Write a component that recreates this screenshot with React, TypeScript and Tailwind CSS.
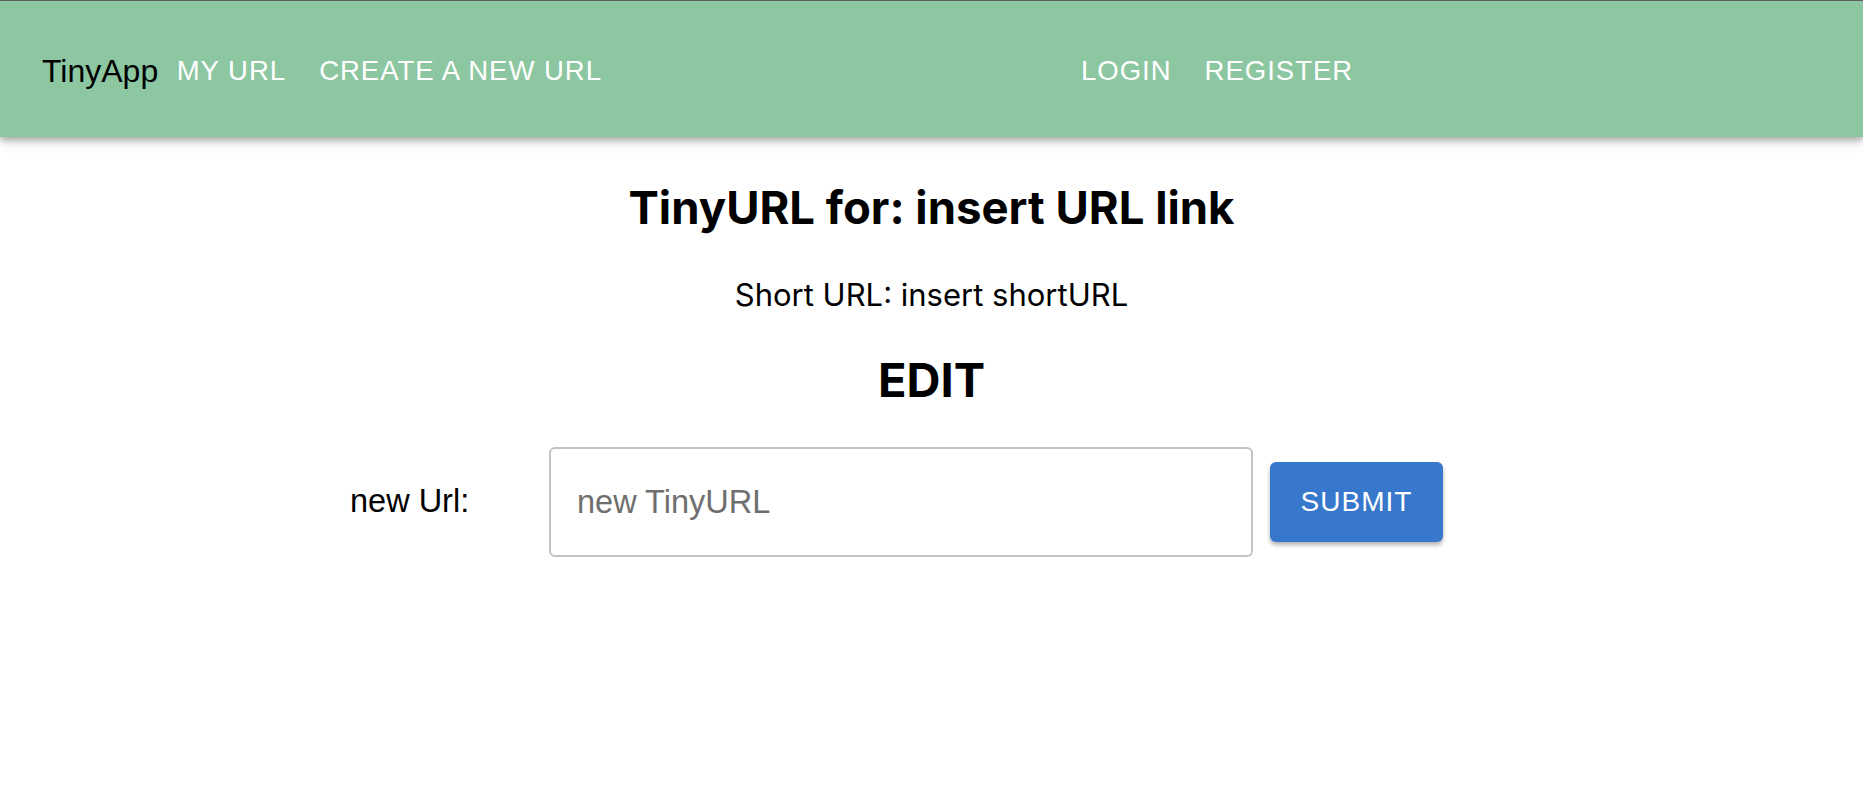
const navFont = { fontFamily: '"Liberation Sans", Arial, sans-serif' };

function NavButton({ children }: { children: string }) {
  return (
    <button className="px-[16.5px] py-2 text-[27.5px] tracking-[1px] uppercase text-white leading-none">
      {children}
    </button>
  );
}

export default function App() {
  return (
    <div className="min-h-[799px] bg-white text-black">
      <header
        style={navFont}
        className="relative z-10 flex h-[137px] items-center border-t border-[#5f5f5f] bg-[#8cc7a1] pl-[42px] pt-[4px] shadow-[0_3px_6px_rgba(0,0,0,0.25),0_6px_10px_rgba(0,0,0,0.12)]"
      >
        <span className="mr-[2px] text-[32px] leading-none">TinyApp</span>
        <NavButton>My URL</NavButton>
        <NavButton>Create a new URL</NavButton>
        <div className="w-[446px]" />
        <NavButton>Login</NavButton>
        <NavButton>Register</NavButton>
      </header>

      <main className="flex flex-col items-center font-['Inter',sans-serif]">
        <h1 className="mt-[44px] text-[45.5px] leading-[54px] font-bold">TinyURL for: insert URL link</h1>
        <p className="mt-[40px] text-[31px] leading-[40px]">Short URL: insert shortURL</p>
        <h2 className="mt-[37px] text-[47px] leading-[56px] font-bold">EDIT</h2>
      </main>

      <form
        style={navFont}
        className="mt-[39px] flex items-center pl-[350px]"
        onSubmit={(e) => e.preventDefault()}
      >
        <label className="w-[199px] text-[32.5px] leading-none -mt-[2px]">new Url:</label>
        <input
          placeholder="new TinyURL"
          className="h-[110px] w-[704px] rounded-[6px] border-2 border-[#c4c4c4] px-[26px] text-[32.5px] outline-none placeholder:text-[#6f6f6f]"
        />
        <button
          type="submit"
          className="ml-[17px] h-[80px] w-[173px] rounded-[6px] bg-[#3777cc] text-[28px] tracking-[1px] text-white shadow-[0_3px_4px_rgba(0,0,0,0.3)]"
        >
          SUBMIT
        </button>
      </form>
    </div>
  );
}
